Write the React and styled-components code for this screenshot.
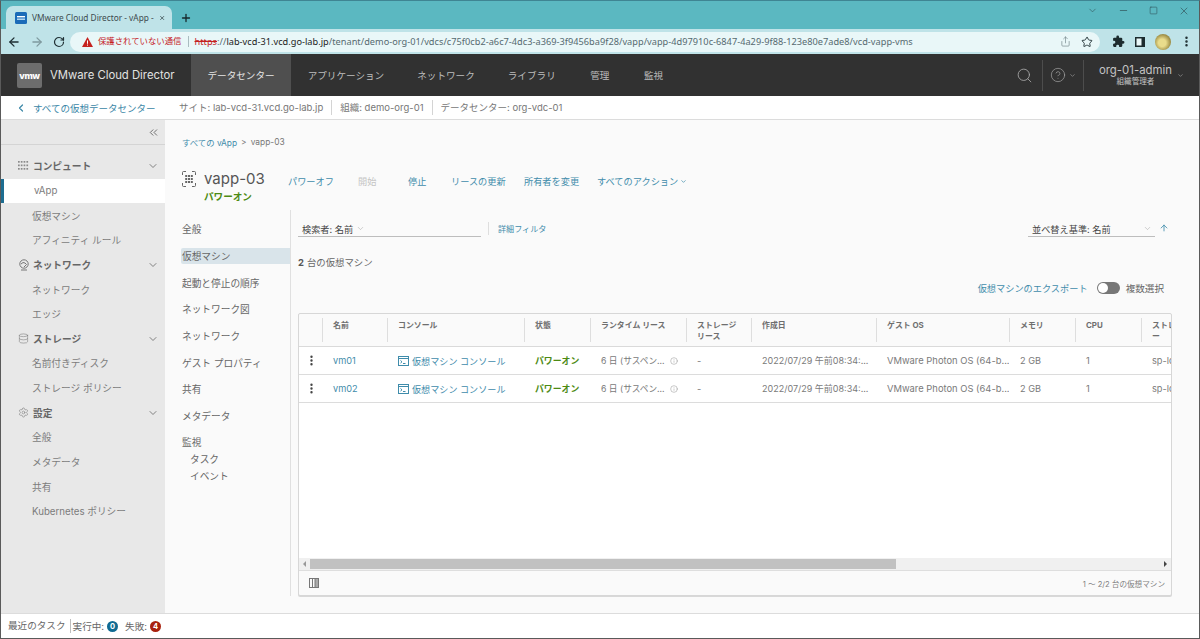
import React from 'react';
import styled, { createGlobalStyle } from 'styled-components';
import { ArrowLeft, ArrowRight, RotateCw, Star, X, Minus, Square, ChevronDown, ChevronLeft, ChevronsLeft, Search, MoreVertical, Plus, ArrowUp, Share, Info, Settings, Database, CircleHelp } from 'lucide-react';

const Global = createGlobalStyle`
  html, body { margin: 0; padding: 0; background: #fafafa; }
  * { box-sizing: border-box; }
  body { font-family: Inter, "Noto Sans CJK JP", sans-serif; }
`;

const Win = styled.div`
  width: 1200px; height: 639px; overflow: hidden; display: flex; flex-direction: column;
  border-left: 1px solid #5a5a5a; border-right: 1px solid #5a5a5a; border-bottom: 1px solid #5a5a5a;
  border-top: 1px solid #3f8593; background: #fafafa; color: #666; font-size: 9.6px; letter-spacing: 0;
`;
const TabBar = styled.div`
  height: 28px; flex: none; background: #5bb8c1; display: flex; align-items: flex-end; padding-left: 5px; position: relative; color: #222;
`;
const Tab = styled.div`
  width: 166px; height: 23px; background: #bfe3e8; border-radius: 7px 7px 0 0; display: flex; align-items: center; padding: 0 7px 0 9px; gap: 5px; font-size: 8.3px; color: #3d4a4e; white-space: nowrap;
`;
const Favicon = styled.svg` width: 12px; height: 12px; flex: none; `;
const TabTitle = styled.span` flex: 1; font-family: "Noto Sans", sans-serif; `;
const NewTab = styled.div` margin-left: 8px; height: 23px; display: flex; align-items: center; color: #17282c; `;
const WinCtl = styled.div`
  position: absolute; right: 0; top: 0; display: flex; align-items: center; height: 19px; color: #33585f;
  gap: 20px; padding-right: 9px;
`;
const ToolBar = styled.div`
  height: 25px; flex: none; background: #bfe3e8; display: flex; align-items: center; padding: 0 0 0 6px; color: #333;
`;
const NavBtns = styled.div` display: flex; align-items: center; gap: 9px; width: 63px; `;
const Omni = styled.div`
  width: 1030px; height: 20px; border-radius: 10px; background: #e9f7f8; display: flex; align-items: center; padding: 0 3px 0 12px; font-size: 9.2px; color: #566a70; white-space: nowrap;
`;
const Warn = styled.span` color: #c5221f; display: inline-flex; align-items: center; gap: 5px; padding-right: 6px; margin-right: 6px; border-right: 1px solid #a9bcc0; line-height: 11px; font-size: 8.4px; `;
const Strike = styled.span` color: #c5221f; text-decoration: line-through; `;
const Host = styled.span` color: #222; `;
const UrlText = styled.span` flex: 1; font-family: "Noto Sans", sans-serif; letter-spacing: .025px; `;
const OmniIcons = styled.span` display: flex; align-items: center; gap: 10px; color: #444; margin-right: 4px; `;
const ToolIcons = styled.div` display: flex; align-items: center; margin-left: 12px; gap: 9px; `;
const Avatar = styled.div` width: 16px; height: 16px; border-radius: 50%; background: radial-gradient(circle at 45% 55%, #e9dc8b 0 30%, #a3934a 65%, #6d6a39 100%); `;

const Header = styled.header`
  height: 42px; flex: none; background: #313131; display: flex; align-items: stretch; padding-left: 16px; color: #c9c9c9;
`;
const Logo = styled.div`
  width: 25px; height: 25px; margin-top: 9px; background: #6d6d6d; border-radius: 2px; color: #fff; font-weight: 800; font-size: 9px; display: flex; align-items: center; justify-content: center; letter-spacing: -.4px;
`;
const Brand = styled.div` width: 149px; padding-left: 8px; display: flex; align-items: center; font-size: 11.3px; color: #e2e2e2; white-space: nowrap; `;
const MainNav = styled.nav` display: flex; `;
const MainItem = styled.a`
  padding: 0 ${p => p.$pad || 16.5}px; display: flex; align-items: center; font-size: 9.6px; white-space: nowrap;
  background: ${p => p.$active ? '#4f4f4f' : 'transparent'}; color: ${p => p.$active ? '#e6e6e6' : '#bdbdbd'};
`;
const HeadRight = styled.div` margin-left: auto; display: flex; align-items: center; `;
const HeadCell = styled.div` height: 31px; display: flex; align-items: center; gap: 3px; padding: 0 ${p => p.$pad || 9}px; border-left: ${p => p.$line ? '1px solid #4d4d4d' : 'none'}; color: #a9a9a9; `;
const User = styled.div` display: flex; flex-direction: column; align-items: center; line-height: 1; margin-right: 2px; `;
const UserName = styled.span` font-size: 11.4px; color: #c3c3c3; `;
const UserRole = styled.span` font-size: 7.6px; margin-top: 2px; color: #c3c3c3; `;

const SubNav = styled.div`
  height: 24px; flex: none; background: #fff; border-bottom: 1px solid #dcdcdc; display: flex; align-items: center; padding-left: 14px; white-space: nowrap; font-size: 9.5px;
`;
const Back = styled.a` display: flex; align-items: center; color: #3b87a7; gap: 6px; width: 164px; `;
const Crumb = styled.span` color: #777; padding-right: 8px; margin-right: 8px; border-right: ${p => p.$last ? 'none' : '1px solid #d4d4d4'}; line-height: 15px; `;

const Body = styled.div` flex: 1; display: flex; min-height: 0; `;
const Side = styled.aside` width: 164px; flex: none; background: #e8e8e8; display: flex; flex-direction: column; `;
const Collapse = styled.div` height: 25px; border-bottom: 1px solid #d4d4d4; display: flex; align-items: center; justify-content: flex-end; padding-right: 5px; color: #555; margin-bottom: 9px; `;
const SideHead = styled.div`
  height: 24.65px; display: flex; align-items: center; padding: 0 6px 0 17px; color: #666; font-weight: 700; font-size: 9.7px;
`;
const SideIcon = styled.span` width: 14px; display: inline-flex; align-items: center; margin-right: 1px; color: #777; `;
const SideLabel = styled.span` flex: 1; `;
const SideItem = styled.a`
  height: 24.65px; display: flex; align-items: center; padding-left: ${p => p.$active ? 30 : 31}px; font-size: 9.7px; color: #7c7c7c; white-space: nowrap;
  background: ${p => p.$active ? '#fff' : 'transparent'};
  border-left: ${p => p.$active ? '3px solid #1d6d91' : 'none'};
`;

const Page = styled.main` flex: 1; min-width: 0; padding: 15px 27px 17px 17px; display: flex; flex-direction: column; `;
const Breadcrumb = styled.div` font-size: 8.4px; height: 13px; display: flex; align-items: center; gap: 4px; color: #777; `;
const Link = styled.a` color: #3f8cab; white-space: nowrap; `;
const TitleRow = styled.div` margin-top: 22px; height: 40px; display: flex; align-items: flex-start; `;
const TitleIcon = styled.svg` width: 14px; height: 16px; margin-top: 1px; flex: none; `;
const TitleText = styled.div` margin-left: 8px; width: 84px; display: flex; flex-direction: column; `;
const Name = styled.div` font-size: 15px; line-height: 18px; color: #555; `;
const PowerState = styled.div` font-size: 9.6px; font-weight: 700; color: #4d8a14; line-height: 14px; margin-top: 2px; `;
const Actions = styled.div` display: flex; margin-top: 4px; height: 14px; align-items: center; `;
const Action = styled.a` width: ${p => p.$w}px; flex: none; font-size: 9.2px; white-space: nowrap; color: ${p => p.$off ? '#c4c4c4' : '#3f8cab'}; display: flex; align-items: center; gap: 2px; `;
const Detail = styled.div` flex: 1; display: flex; min-height: 0; `;
const DetailNav = styled.div` width: 109px; flex: none; border-right: 1px solid #e0e0e0; margin-right: 7px; padding-top: 6px; display: flex; flex-direction: column; `;
const DetailItem = styled.a`
  height: 26.7px; display: flex; align-items: center; font-size: 9.7px; color: #666; white-space: nowrap; position: relative; z-index: 0;
  &::before { content: ''; display: ${p => p.$active ? 'block' : 'none'}; position: absolute; left: -1px; right: 0; top: 5px; bottom: 5px; background: #d9e4ea; z-index: -1; border-radius: 2px 0 0 2px; }
`;
const DetailSub = styled.div` height: 17px; display: flex; align-items: center; padding-left: ${p => p.$sub ? 8 : 0}px; font-size: 9.7px; color: #666; `;
const Gap = styled.div` height: ${p => p.$h}px; flex: none; `;
const Content = styled.section` flex: 1; min-width: 0; display: flex; flex-direction: column; `;
const FilterRow = styled.div` height: 27px; display: flex; align-items: flex-start; `;
const Select = styled.div`
  width: ${p => p.$w}px; height: 20px; border-bottom: 1px solid #bdbdbd; display: flex; align-items: center; padding: 4px 3px 0 4px; color: #444; font-size: 9.2px; gap: 3px; white-space: nowrap; margin-top: 7px;
`;
const SelectValue = styled.span` flex: ${p => p.$grow ? 1 : 'none'}; `;
const FilterLink = styled.div` margin: 12px 0 0 7px; padding-left: 9px; border-left: 1px solid #dedede; height: 13px; display: flex; align-items: center; font-size: 8.1px; color: #3f8cab; `;
const SortBox = styled.div` margin-left: auto; display: flex; align-items: flex-start; gap: 4px; `;
const Arrow = styled.span` margin-top: 13px; color: #3f8cab; margin-right: 3px; display: flex; `;
const Count = styled.div` margin-top: 18px; height: 14px; font-size: 9.4px; color: #666; display: flex; align-items: center; gap: 3px; `;
const Strong = styled.b` color: #555; `;
const ExportRow = styled.div` margin-top: 11px; height: 16px; display: flex; align-items: center; justify-content: flex-end; padding-right: 8px; gap: 9px; font-size: 9.6px; color: #666; `;
const ExportLink = styled(Link)` font-size: 9.2px; `;
const Toggle = styled.span` width: 23px; height: 12px; border-radius: 6px; background: #777; position: relative; flex: none; margin-right: -3px; &::after { content: ''; position: absolute; left: 1px; top: 1px; width: 10px; height: 10px; border-radius: 50%; background: #fff; } `;

const Table = styled.div` margin-top: 17px; flex: 1; min-height: 0; border: 1px solid #d7d7d7; border-radius: 2px; background: #fafafa; display: flex; flex-direction: column; overflow: hidden; box-shadow: 0 1px 0 #d8d8d8; `;
const Cols = '23px 65px 137px 66px 96px 65px 125px 133px 66px 66px 80px';
const THead = styled.div` display: grid; grid-template-columns: ${Cols}; height: 33px; flex: none; border-bottom: 1px solid #dadada; `;
const Th = styled.div` margin: 4px 0; padding: 2px 0 0 10px; border-left: ${p => p.$first ? 'none' : '1px solid #dedede'}; font-size: 7.9px; font-weight: 700; color: #6e6e6e; line-height: 11px; overflow: hidden; `;
const TBody = styled.div` flex: 1; background: #fff; min-height: 0; `;
const Row = styled.div` display: grid; grid-template-columns: ${Cols}; height: 28px; border-bottom: 1px solid #dcdcdc; align-items: center; `;
const Td = styled.div` padding-left: 11px; font-size: ${p => p.$fs || 9.2}px; color: #7a7a7a; white-space: nowrap; overflow: hidden; display: flex; align-items: center; gap: 5px; `;
const Kebab = styled.div` display: flex; justify-content: center; padding-left: 2px; color: #444; `;
const Console = styled.a` color: #3f8cab; display: flex; align-items: center; gap: 3px; font-size: 9.1px; `;
const Green = styled.span` color: #4d8a14; font-weight: 700; font-size: 8.9px; `;
const Scrollbar = styled.div` height: 12px; flex: none; background: #f0f0f0; display: flex; align-items: center; padding: 0 4px 0 4px; color: #555; `;
const Tri = styled.span` width: 0; height: 0; border-top: 3px solid transparent; border-bottom: 3px solid transparent; ${p => p.$right ? 'border-left: 3px solid #444;' : 'border-right: 3px solid #999;'} flex: none; `;
const Track = styled.div` flex: 1; height: 10px; margin: 0 3px 0 4px; `;
const Thumb = styled.div` width: 586px; height: 100%; background: #c1c1c1; `;
const TFoot = styled.div` height: 25px; flex: none; border-top: 1px solid #dedede; display: flex; align-items: center; justify-content: space-between; padding: 0 6px 0 10px; font-size: 7.6px; color: #808080; `;
const ColIcon = styled.svg` width: 10px; height: 10px; `;

const Footer = styled.footer` height: 25px; flex: none; background: #fff; border-top: 1px solid #dcdcdc; display: flex; align-items: center; padding-left: 7px; font-size: 9.6px; color: #666; white-space: nowrap; `;
const FootLabel = styled.span` padding-right: 4px; margin-right: 2px; border-right: ${p => p.$line ? '1px solid #bdbdbd' : 'none'}; line-height: 14px; `;
const Badge = styled.span` width: 11px; height: 11px; border-radius: 50%; background: ${p => p.$c}; color: #fff; font-size: 7.5px; font-weight: 700; display: inline-flex; align-items: center; justify-content: center; margin: 0 7px 0 3px; `;

const VappIcon = () => (
  <TitleIcon viewBox="0 0 14 16" fill="none" stroke="#666" strokeWidth="1">
    <path d="M4 .5H1.5a1 1 0 0 0-1 1V4M10 .5h2.5a1 1 0 0 1 1 1V4M.5 12v2.5a1 1 0 0 0 1 1H4M13.5 12v2.5a1 1 0 0 1-1 1H10" />
    <g fill="#666" stroke="none">
      <rect x="3.2" y="4" width="2" height="2" /><rect x="6" y="4" width="2" height="2" /><rect x="8.8" y="4" width="2" height="2" />
      <rect x="3.2" y="7" width="2" height="2" /><rect x="6" y="7" width="2" height="2" /><rect x="8.8" y="7" width="2" height="2" />
      <rect x="3.2" y="10" width="2" height="2" /><rect x="6" y="10" width="2" height="2" /><rect x="8.8" y="10" width="2" height="2" />
    </g>
  </TitleIcon>
);
const GridDots = () => (
  <svg width="11" height="10" viewBox="0 0 11 10" fill="#8a8a8a">
    {[0, 3.5, 7].flatMap(y => [0, 2.8, 5.6, 8.4].map(x => <rect key={`${x}-${y}`} x={x} y={y} width="1.7" height="1.7" />))}
  </svg>
);
const NetIcon = () => (
  <svg width="12" height="12" viewBox="0 0 12 12" fill="none" stroke="#777" strokeWidth="1">
    <circle cx="6" cy="5" r="4.2" /><path d="M3 5l2-1.5 2 .5 1.5 1.5L6 8M3 11h6" />
  </svg>
);
const ConsoleIcon = () => (
  <svg width="11" height="10" viewBox="0 0 11 10" fill="none" stroke="#3f8cab" strokeWidth="1">
    <rect x=".5" y=".5" width="10" height="9" /><path d="M.5 2.5h10M2.5 4.5l1.5 1.3-1.5 1.3M5 7.5h2.5" />
  </svg>
);
const PuzzleFill = () => (
  <svg width="13" height="13" viewBox="0 0 24 24" fill="#1c2b2e"><path d="M20.5 11H19V7a2 2 0 0 0-2-2h-4V3.5a2.5 2.5 0 0 0-5 0V5H4a2 2 0 0 0-2 2v3.8h1.5a2.7 2.7 0 0 1 0 5.4H2V20a2 2 0 0 0 2 2h3.8v-1.5a2.7 2.7 0 0 1 5.4 0V22H17a2 2 0 0 0 2-2v-4h1.5a2.5 2.5 0 0 0 0-5z" /></svg>
);
const SidePanelIcon = () => (
  <svg width="12" height="12" viewBox="0 0 12 12"><rect x="1" y="1" width="10" height="10" fill="#1c2b2e" /><rect x="2.5" y="2.5" width="5" height="7" fill="#e9f7f8" /></svg>
);

const rows = ['vm01', 'vm02'];

export default function App() {
  return (
    <Win>
      <Global />
      <TabBar>
        <Tab>
          <Favicon viewBox="0 0 12 12"><rect width="12" height="12" rx="1.5" fill="#1b6bb8" /><rect x="2" y="4" width="8" height="1.4" fill="#fff" /><rect x="2" y="6.5" width="8" height="1.4" fill="#bfe0f5" /></Favicon>
          <TabTitle>VMware Cloud Director - vApp -</TabTitle>
          <X size={10} strokeWidth={2.6} color="#26363a" />
        </Tab>
        <NewTab><Plus size={12} strokeWidth={2.6} /></NewTab>
        <WinCtl>
          <ChevronDown size={11} strokeWidth={1.4} />
          <Minus size={11} strokeWidth={1.6} />
          <Square size={9} strokeWidth={1.6} />
          <X size={12} strokeWidth={1.4} />
        </WinCtl>
      </TabBar>
      <ToolBar>
        <NavBtns>
          <ArrowLeft size={14} strokeWidth={2.2} color="#1f2f33" />
          <ArrowRight size={14} strokeWidth={2.2} color="#7f9a9f" />
          <RotateCw size={12} strokeWidth={2.4} color="#1f2f33" />
        </NavBtns>
        <Omni>
          <Warn>
            <svg width="11" height="10" viewBox="0 0 11 10"><path d="M5.5 0L11 10H0z" fill="#c5221f" /><rect x="5" y="3.4" width="1" height="3.4" fill="#fff" /><rect x="5" y="7.6" width="1" height="1" fill="#fff" /></svg>
            保護されていない通信
          </Warn>
          <UrlText><Strike>https</Strike>://<Host>lab-vcd-31.vcd.go-lab.jp</Host>/tenant/demo-org-01/vdcs/c75f0cb2-a6c7-4dc3-a369-3f9456ba9f28/vapp/vapp-4d97910c-6847-4a29-9f88-123e80e7ade8/vcd-vapp-vms</UrlText>
          <OmniIcons>
            <Share size={11} strokeWidth={1.5} color="#76888c" />
            <Star size={12} strokeWidth={2} color="#2d3d41" />
          </OmniIcons>
        </Omni>
        <ToolIcons>
          <PuzzleFill />
          <SidePanelIcon />
          <Avatar />
          <MoreVertical size={13} strokeWidth={2.6} color="#1c2b2e" />
        </ToolIcons>
      </ToolBar>
      <Header>
        <Logo>vmw</Logo>
        <Brand>VMware Cloud Director</Brand>
        <MainNav>
          <MainItem $active>データセンター</MainItem>
          <MainItem>アプリケーション</MainItem>
          <MainItem>ネットワーク</MainItem>
          <MainItem>ライブラリ</MainItem>
          <MainItem $pad={18}>管理</MainItem>
          <MainItem>監視</MainItem>
        </MainNav>
        <HeadRight>
          <HeadCell $pad={9}><Search size={17} strokeWidth={1.2} /></HeadCell>
          <HeadCell $line $pad={7}><CircleHelp size={16} strokeWidth={1} /><ChevronDown size={7} strokeWidth={2} /></HeadCell>
          <HeadCell $line $pad={15}>
            <User><UserName>org-01-admin</UserName><UserRole>組織管理者</UserRole></User>
            <ChevronDown size={7} strokeWidth={2} />
          </HeadCell>
        </HeadRight>
      </Header>
      <SubNav>
        <Back><ChevronLeft size={12} strokeWidth={2.4} />すべての仮想データセンター</Back>
        <Crumb>サイト: lab-vcd-31.vcd.go-lab.jp</Crumb>
        <Crumb>組織: demo-org-01</Crumb>
        <Crumb $last>データセンター: org-vdc-01</Crumb>
      </SubNav>
      <Body>
        <Side>
          <Collapse><ChevronsLeft size={13} strokeWidth={1.5} /></Collapse>
          <SideHead><SideIcon><GridDots /></SideIcon><SideLabel>コンピュート</SideLabel><ChevronDown size={12} strokeWidth={1.6} /></SideHead>
          <SideItem $active>vApp</SideItem>
          <SideItem>仮想マシン</SideItem>
          <SideItem>アフィニティ ルール</SideItem>
          <SideHead><SideIcon><NetIcon /></SideIcon><SideLabel>ネットワーク</SideLabel><ChevronDown size={12} strokeWidth={1.6} /></SideHead>
          <SideItem>ネットワーク</SideItem>
          <SideItem>エッジ</SideItem>
          <SideHead><SideIcon><Database size={11} strokeWidth={1.2} /></SideIcon><SideLabel>ストレージ</SideLabel><ChevronDown size={12} strokeWidth={1.6} /></SideHead>
          <SideItem>名前付きディスク</SideItem>
          <SideItem>ストレージ ポリシー</SideItem>
          <SideHead><SideIcon><Settings size={11} strokeWidth={1.2} /></SideIcon><SideLabel>設定</SideLabel><ChevronDown size={12} strokeWidth={1.6} /></SideHead>
          <SideItem>全般</SideItem>
          <SideItem>メタデータ</SideItem>
          <SideItem>共有</SideItem>
          <SideItem>Kubernetes ポリシー</SideItem>
        </Side>
        <Page>
          <Breadcrumb><Link>すべての vApp</Link><span>&gt;</span><span>vapp-03</span></Breadcrumb>
          <TitleRow>
            <VappIcon />
            <TitleText><Name>vapp-03</Name><PowerState>パワーオン</PowerState></TitleText>
            <Actions>
              <Action $w={70}>パワーオフ</Action>
              <Action $w={50} $off>開始</Action>
              <Action $w={43}>停止</Action>
              <Action $w={73}>リースの更新</Action>
              <Action $w={73}>所有者を変更</Action>
              <Action $w={95}>すべてのアクション<ChevronDown size={7} strokeWidth={2.4} /></Action>
            </Actions>
          </TitleRow>
          <Detail>
            <DetailNav>
              <DetailItem>全般</DetailItem>
              <DetailItem $active>仮想マシン</DetailItem>
              <DetailItem>起動と停止の順序</DetailItem>
              <DetailItem>ネットワーク図</DetailItem>
              <DetailItem>ネットワーク</DetailItem>
              <DetailItem>ゲスト プロパティ</DetailItem>
              <DetailItem>共有</DetailItem>
              <DetailItem>メタデータ</DetailItem>
              <Gap $h={4} />
              <DetailSub>監視</DetailSub>
              <DetailSub $sub>タスク</DetailSub>
              <DetailSub $sub>イベント</DetailSub>
            </DetailNav>
            <Content>
              <FilterRow>
                <Select $w={183}>検索者: 名前<ChevronDown size={9} strokeWidth={1.2} color="#999" /></Select>
                <FilterLink>詳細フィルタ</FilterLink>
                <SortBox>
                  <Select $w={127}><SelectValue $grow>並べ替え基準: 名前</SelectValue><ChevronDown size={9} strokeWidth={1.2} color="#999" /></Select>
                  <Arrow><ArrowUp size={10} strokeWidth={2} /></Arrow>
                </SortBox>
              </FilterRow>
              <Count><Strong>2</Strong>台の仮想マシン</Count>
              <ExportRow><ExportLink>仮想マシンのエクスポート</ExportLink><Toggle /><span>複数選択</span></ExportRow>
              <Table>
                <THead>
                  <Th $first />
                  <Th>名前</Th>
                  <Th>コンソール</Th>
                  <Th>状態</Th>
                  <Th>ランタイム リース</Th>
                  <Th>ストレージ<br />リース</Th>
                  <Th>作成日</Th>
                  <Th>ゲスト OS</Th>
                  <Th>メモリ</Th>
                  <Th>CPU</Th>
                  <Th>ストレ<br />ー</Th>
                </THead>
                <TBody>
                  {rows.map(vm => (
                    <Row key={vm}>
                      <Kebab><MoreVertical size={13} strokeWidth={2.4} /></Kebab>
                      <Td><Link>{vm}</Link></Td>
                      <Td><Console><ConsoleIcon />仮想マシン コンソール</Console></Td>
                      <Td><Green>パワーオン</Green></Td>
                      <Td $fs={8.7}>6 日 (サスペン...<Info size={8} strokeWidth={1.2} /></Td>
                      <Td>-</Td>
                      <Td $fs={9}>2022/07/29 午前08:34:...</Td>
                      <Td $fs={9.4}>VMware Photon OS (64-b...</Td>
                      <Td>2 GB</Td>
                      <Td>1</Td>
                      <Td>sp-lo</Td>
                    </Row>
                  ))}
                </TBody>
                <Scrollbar><Tri /><Track><Thumb /></Track><Tri $right /></Scrollbar>
                <TFoot>
                  <ColIcon viewBox="0 0 10 10" fill="none" stroke="#777"><rect x=".5" y=".5" width="9" height="9" /><rect x="6" y=".5" width="3.5" height="9" fill="#aaa" /><path d="M3.5 .5v9" /></ColIcon>
                  <span>1 ～ 2/2 台の仮想マシン</span>
                </TFoot>
              </Table>
            </Content>
          </Detail>
        </Page>
      </Body>
      <Footer>
        <FootLabel $line>最近のタスク</FootLabel>
        <span>実行中:</span><Badge $c="#0f6a92">0</Badge>
        <span>失敗:</span><Badge $c="#a8200d">4</Badge>
      </Footer>
    </Win>
  );
}
